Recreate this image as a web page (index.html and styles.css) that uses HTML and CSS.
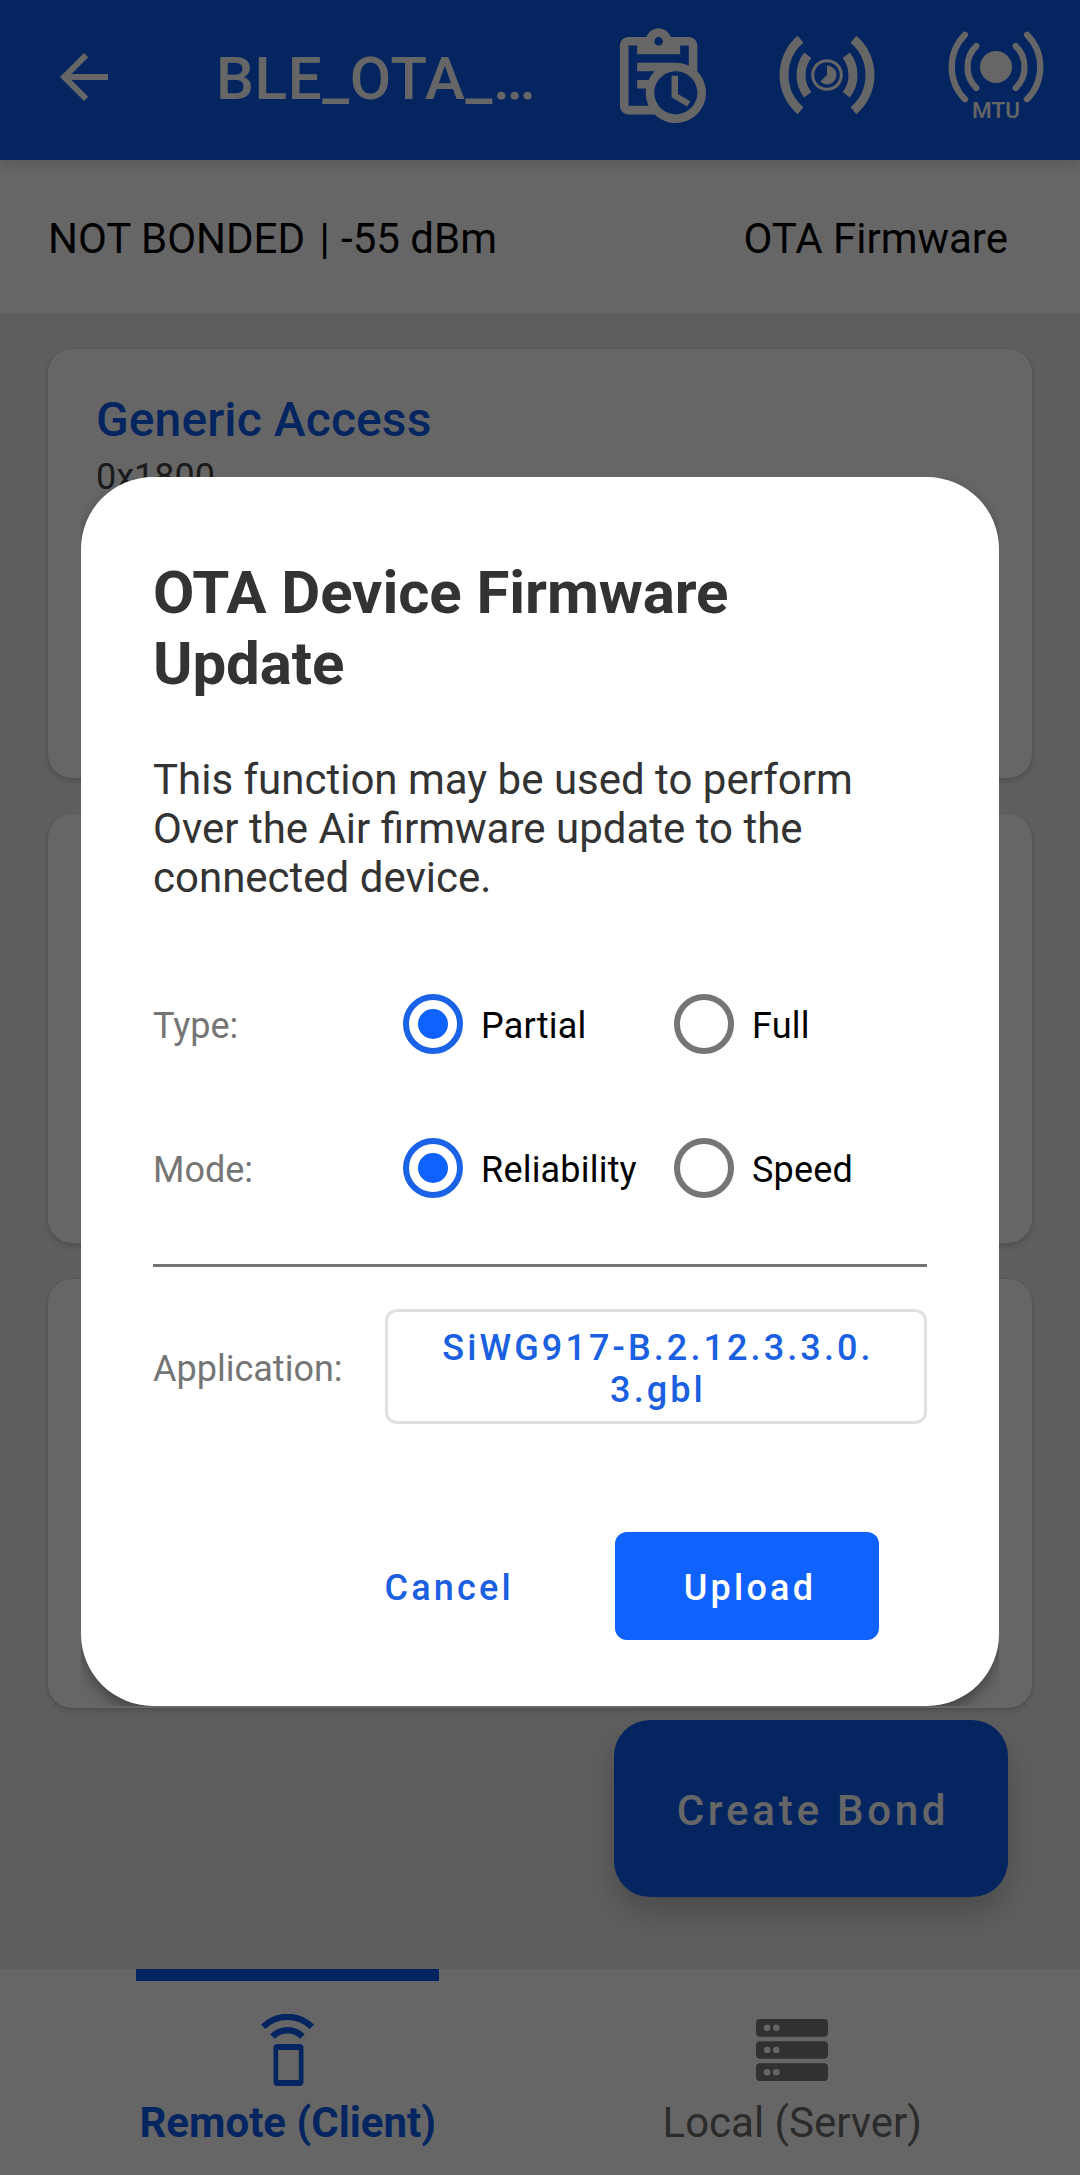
FILE: index.html
```html
<!DOCTYPE html>
<html lang="en">
<head>
<meta charset="utf-8">
<title>OTA Device Firmware Update</title>
<link rel="stylesheet" href="styles.css">
</head>
<body>
<div class="screen">
  <header class="appbar">
    <svg class="back" viewBox="0 0 24 24"><path d="M20 11H7.83l5.59-5.59L12 4l-8 8 8 8 1.41-1.41L7.83 13H20v-2z"/></svg>
    <h1 class="appbar-title">BLE_OTA_…</h1>
    <svg class="log-icon" viewBox="0 0 24 24"><path d="M21 11.11V5C21 3.9 20.11 3 19 3H14.82C14.4 1.84 13.3 1 12 1S9.6 1.84 9.18 3H5C3.9 3 3 3.9 3 5V19C3 20.11 3.9 21 5 21H11.11C12.37 22.24 14.09 23 16 23C19.87 23 23 19.87 23 16C23 14.09 22.24 12.37 21 11.11M12 3C12.55 3 13 3.45 13 4S12.55 5 12 5 11 4.55 11 4 11.45 3 12 3M5 19V5H7V7H17V5H19V9.68C18.09 9.25 17.08 9 16 9H7V11H11.1C10.5 11.57 10.04 12.25 9.68 13H7V15H9.08C9.03 15.33 9 15.66 9 16C9 17.08 9.25 18.09 9.68 19H5M16 21C13.24 21 11 18.76 11 16C11 13.24 13.24 11 16 11C18.76 11 21 13.24 21 16C21 18.76 18.76 21 16 21M16.5 16.25L19.36 17.94L18.61 19.16L15 17V12H16.5V16.25Z"/></svg>
    <svg class="interval-icon" viewBox="-50 -75 100 160">
      <g class="line wide">
        <path d="M-26.5-35.7A46.9 46.9 0 0 0-26.5 35.7M26.5-35.7A46.9 46.9 0 0 1 26.5 35.7"/>
        <path d="M-19.3-19.8A32.6 32.6 0 0 0-19.3 19.8M19.3-19.8A32.6 32.6 0 0 1 19.3 19.8"/>
      </g>
      <circle class="line thin" r="14.3"/>
      <path d="M0 0V-9.4A9.4 9.4 0 1 1-6.6 6.6Z"/>
    </svg>
    <svg class="mtu-icon" viewBox="-50 -67 100 160">
      <g class="line round">
        <path d="M-31-32.3A45.9 45.9 0 0 0-31 32.3M31-32.3A45.9 45.9 0 0 1 31 32.3"/>
        <path d="M-19.7-21A29.4 29.4 0 0 0-19.7 21M19.7-21A29.4 29.4 0 0 1 19.7 21"/>
      </g>
      <circle r="16"/>
      <text class="mtu-text" x="0" y="51.3">MTU</text>
    </svg>
  </header>

  <div class="status">
    <span>NOT BONDED <span class="separator">|</span> -55 dBm</span>
    <span>OTA Firmware</span>
  </div>

  <main class="services">
    <section class="card">
      <h2 class="card-title">Generic Access</h2>
      <p class="card-uuid">0x1800</p>
    </section>
    <section class="card"></section>
    <section class="card"></section>
    <button class="bond">Create Bond</button>
  </main>

  <nav class="tabs">
    <div class="tab active">
      <svg class="tab-icon" viewBox="-35.5 0 72 72">
        <path class="signal" d="M-24.3 12.8A34.8 34.8 0 0 1 24.3 12.8M-15 22.6A21 21 0 0 1 15 22.6"/>
        <path fill-rule="evenodd" d="M-10 30H12a4 4 0 0 1 4 4V68a4 4 0 0 1-4 4H-10a4 4 0 0 1-4-4V34a4 4 0 0 1 4-4ZM-9.3 36V66H11.3V36Z"/>
      </svg>
      <span>Remote (Client)</span>
    </div>
    <div class="tab">
      <svg class="tab-icon" viewBox="0 0 72 72">
        <rect y="5" width="72" height="17.7" rx="4"/>
        <rect y="27.3" width="72" height="17.4" rx="4"/>
        <rect y="49.3" width="72" height="17.7" rx="4"/>
        <g class="led">
          <circle cx="11.1" cy="13.8" r="3.3"/><circle cx="20.3" cy="13.8" r="3.3"/>
          <circle cx="11.1" cy="36" r="3.3"/><circle cx="20.3" cy="36" r="3.3"/>
          <circle cx="11.1" cy="58.3" r="3.3"/><circle cx="20.3" cy="58.3" r="3.3"/>
        </g>
      </svg>
      <span>Local (Server)</span>
    </div>
  </nav>
</div>

<div class="scrim">
  <div class="dialog-clip">
    <div class="dialog">
      <h2 class="dialog-title">OTA Device Firmware Update</h2>
      <p class="dialog-text">This function may be used to perform Over the Air firmware update to the connected device.</p>
      <div class="options">
        <span class="label">Type:</span>
        <span class="radio on"></span><span class="choice">Partial</span>
        <span class="radio"></span><span class="choice">Full</span>
      </div>
      <div class="options">
        <span class="label">Mode:</span>
        <span class="radio on"></span><span class="choice">Reliability</span>
        <span class="radio"></span><span class="choice">Speed</span>
      </div>
      <hr class="divider">
      <div class="file-row">
        <span class="label">Application:</span>
        <button class="file">SiWG917-B.2.12.3.3.0.<br>3.gbl</button>
      </div>
      <div class="actions">
        <button class="cancel">Cancel</button>
        <button class="upload">Upload</button>
      </div>
    </div>
  </div>
</div>
</body>
</html>
```
FILE: styles.css
```css
* { box-sizing: border-box; margin: 0; padding: 0; }

:root {
  --blue: #0e5ef0;
  --accent: #0f62fe;
  --link: #1a60e0;
}

body {
  position: relative;
  width: 1080px;
  height: 2175px;
  overflow: hidden;
  font-family: Roboto, "Liberation Sans", sans-serif;
  background: #ebebeb;
}

button { font: inherit; border: 0; background: none; }

.screen { display: flex; flex-direction: column; height: 2175px; }

/* App bar */
.appbar {
  position: relative;
  z-index: 1;
  display: flex;
  flex: none;
  height: 160px;
  background: var(--blue);
  color: #fff;
  fill: #fff;
  box-shadow: 0 3px 12px rgba(0, 0, 0, .16);
}
.appbar svg { flex: none; }
.back { width: 72px; height: 72px; margin: 40.5px 0 0 48px; }
.appbar-title {
  width: 391px;
  margin: 43.5px 0 0 96px;
  font-size: 60px;
  font-weight: 500;
  line-height: 70px;
  letter-spacing: .7px;
  white-space: nowrap;
}
.log-icon { width: 103.3px; height: 103.3px; margin-top: 23.7px; }
.interval-icon { width: 100px; height: 160px; margin-left: 66.7px; }
.mtu-icon { width: 100px; height: 160px; margin-left: 69px; }
.line { fill: none; stroke: #fff; }
.wide { stroke-width: 9px; }
.thin { stroke-width: 3px; }
.round { stroke-width: 6.2px; stroke-linecap: round; }
.mtu-text { font-size: 22.5px; font-weight: 500; text-anchor: middle; }

/* Connection status */
.status {
  display: flex;
  flex: none;
  justify-content: space-between;
  align-items: center;
  height: 153px;
  padding: 3px 72px 0 48px;
  background: #fff;
  color: #000;
  font-size: 42px;
  line-height: 49px;
}
.separator { margin: 0 1px 0 4px; }

/* Services */
.services {
  display: flex;
  flex: 1;
  flex-direction: column;
  gap: 36px;
  padding: 36px 48px 0;
}
.card {
  flex: none;
  height: 429px;
  padding: 43px 48px;
  border-radius: 24px;
  background: #fff;
  box-shadow: 0 3px 6px rgba(0, 0, 0, .16), 0 0 2px rgba(0, 0, 0, .12);
}
.card-title {
  color: var(--blue);
  font-size: 48px;
  font-weight: 500;
  line-height: 56px;
  letter-spacing: .1px;
}
.card-uuid { margin-top: 8px; color: #444; font-size: 36px; line-height: 42px; }
.bond {
  flex: none;
  align-self: flex-end;
  width: 394px;
  height: 177px;
  margin: -24px 24px 0 0;
  padding: 4px 0 0 4px;
  border-radius: 36px;
  background: var(--blue);
  color: #fff;
  font-size: 42px;
  font-weight: 500;
  letter-spacing: 3.75px;
  box-shadow: 0 16px 30px rgba(0, 0, 0, .2);
}

/* Bottom tabs */
.tabs {
  display: flex;
  flex: none;
  height: 206px;
  padding: 0 36px;
  background: #fff;
}
.tab {
  display: flex;
  flex: 1;
  flex-direction: column;
  align-items: center;
  color: #6d6d6d;
  fill: #7a7a7a;
  font-size: 42px;
  line-height: 49px;
}
.tab::before { content: ""; width: 303px; height: 12px; }
.tab-icon { width: 72px; height: 72px; margin: 33px 0 12px; }
.led { fill: #fff; }
.active { padding-right: 1px; color: var(--blue); fill: var(--blue); font-weight: 700; }
.active::before { background: var(--blue); }
.signal { fill: none; stroke: var(--blue); stroke-width: 6.4px; }

/* Dialog */
.scrim {
  position: absolute;
  inset: 0;
  z-index: 2;
  padding: 477px 81px 0;
  background: rgba(0, 0, 0, .6);
}
.dialog-clip { overflow: hidden; }
.dialog {
  height: 1229px;
  padding: 81px 72px 66px;
  border-radius: 72px;
  background: #fff;
  color: #333;
  box-shadow: 0 7px 14px rgba(0, 0, 0, .32);
}
.dialog-title {
  width: 640px;
  font-size: 60px;
  font-weight: 700;
  line-height: 70.5px;
  letter-spacing: -.1px;
}
.dialog-text { width: 740px; margin-top: 56px; font-size: 42px; line-height: 49px; }
.dialog-text + .options { margin-top: 50px; }
.options {
  display: grid;
  grid-template-columns: 250px 60px 211px 60px 1fr;
  align-items: center;
  height: 144px;
  font-size: 36px;
  line-height: 42px;
}
.label { padding-top: 4px; color: #757575; font-size: 36px; line-height: 42px; }
.choice { padding: 4px 0 0 18px; color: #000; letter-spacing: .2px; white-space: nowrap; }
.radio {
  display: grid;
  place-items: center;
  width: 60px;
  height: 60px;
  border: 6px solid #757575;
  border-radius: 50%;
}
.on { border-color: #1a62e6; }
.on::before { content: ""; width: 30px; height: 30px; border-radius: 50%; background: var(--accent); }
.divider { height: 3px; margin-top: 24px; border: 0; background: #757575; }
.file-row { display: flex; align-items: center; justify-content: space-between; margin-top: 42px; }
.file {
  width: 542px;
  height: 115px;
  padding: 5px 0 0 4px;
  border: 3px solid #e0e0e0;
  border-radius: 12px;
  color: var(--link);
  font-size: 36px;
  font-weight: 500;
  line-height: 42px;
  letter-spacing: 3.1px;
}
.actions {
  display: flex;
  justify-content: flex-end;
  gap: 101px;
  margin-top: 108px;
  padding-right: 48px;
  font-size: 36px;
  font-weight: 500;
}
.actions button { height: 108px; padding-top: 4px; letter-spacing: 3.21px; }
.cancel { color: var(--link); }
.actions .upload {
  width: 264px;
  padding-left: 6px;
  border-radius: 12px;
  background: var(--accent);
  color: #fff;
}
```
